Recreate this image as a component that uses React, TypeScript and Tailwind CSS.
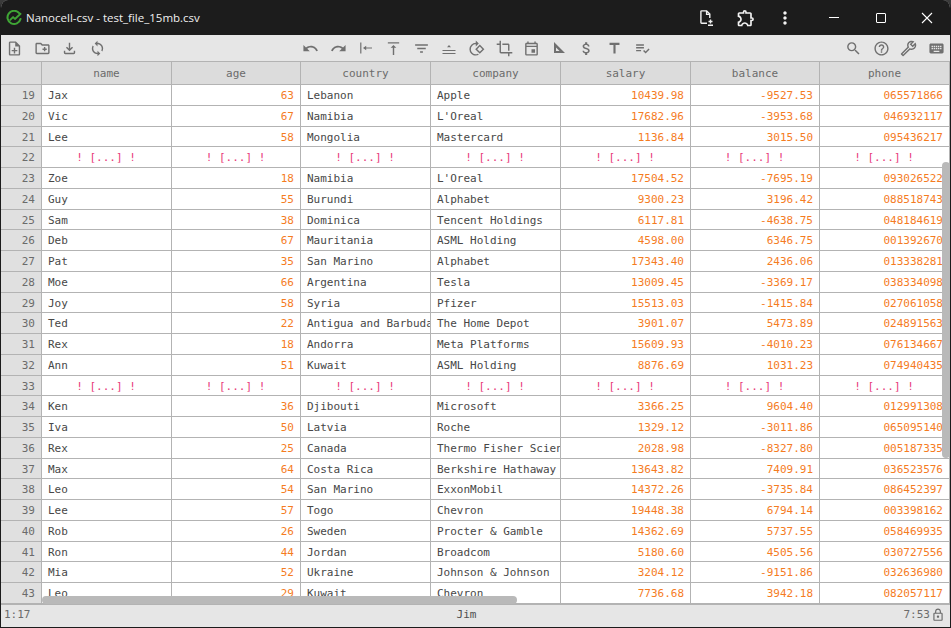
import React from 'react';
import {
  MdOutlineNoteAdd, MdOutlineCreateNewFolder, MdOutlineFileDownload, MdOutlineSync,
  MdUndo, MdRedo, MdOutlineVerticalAlignTop, MdFilterList, MdOutlineRotate90DegreesCcw,
  MdCrop, MdOutlineEvent, MdAttachMoney, MdTitle, MdPlaylistAddCheck, MdSearch,
  MdHelpOutline, MdOutlineBuild, MdKeyboard, MdOutlineLock, MdOutlineExtension, MdMoreVert,
} from 'react-icons/md';

type Row = [number, string, number, string, string, string, string, string];

const rows: (Row | number)[] = [
  [19, 'Jax', 63, 'Lebanon', 'Apple', '10439.98', '-9527.53', '065571866'],
  [20, 'Vic', 67, 'Namibia', "L'Oreal", '17682.96', '-3953.68', '046932117'],
  [21, 'Lee', 58, 'Mongolia', 'Mastercard', '1136.84', '3015.50', '095436217'],
  22,
  [23, 'Zoe', 18, 'Namibia', "L'Oreal", '17504.52', '-7695.19', '093026522'],
  [24, 'Guy', 55, 'Burundi', 'Alphabet', '9300.23', '3196.42', '088518743'],
  [25, 'Sam', 38, 'Dominica', 'Tencent Holdings', '6117.81', '-4638.75', '048184619'],
  [26, 'Deb', 67, 'Mauritania', 'ASML Holding', '4598.00', '6346.75', '001392670'],
  [27, 'Pat', 35, 'San Marino', 'Alphabet', '17343.40', '2436.06', '013338281'],
  [28, 'Moe', 66, 'Argentina', 'Tesla', '13009.45', '-3369.17', '038334098'],
  [29, 'Joy', 58, 'Syria', 'Pfizer', '15513.03', '-1415.84', '027061058'],
  [30, 'Ted', 22, 'Antigua and Barbuda', 'The Home Depot', '3901.07', '5473.89', '024891563'],
  [31, 'Rex', 18, 'Andorra', 'Meta Platforms', '15609.93', '-4010.23', '076134667'],
  [32, 'Ann', 51, 'Kuwait', 'ASML Holding', '8876.69', '1031.23', '074940435'],
  33,
  [34, 'Ken', 36, 'Djibouti', 'Microsoft', '3366.25', '9604.40', '012991308'],
  [35, 'Iva', 50, 'Latvia', 'Roche', '1329.12', '-3011.86', '065095140'],
  [36, 'Rex', 25, 'Canada', 'Thermo Fisher Scientific', '2028.98', '-8327.80', '005187335'],
  [37, 'Max', 64, 'Costa Rica', 'Berkshire Hathaway', '13643.82', '7409.91', '036523576'],
  [38, 'Leo', 54, 'San Marino', 'ExxonMobil', '14372.26', '-3735.84', '086452397'],
  [39, 'Lee', 57, 'Togo', 'Chevron', '19448.38', '6794.14', '003398162'],
  [40, 'Rob', 26, 'Sweden', 'Procter & Gamble', '14362.69', '5737.55', '058469935'],
  [41, 'Ron', 44, 'Jordan', 'Broadcom', '5180.60', '4505.56', '030727556'],
  [42, 'Mia', 52, 'Ukraine', 'Johnson & Johnson', '3204.12', '-9151.86', '032636980'],
  [43, 'Leo', 29, 'Kuwait', 'Chevron', '7736.68', '3942.18', '082057117'],
];

const headers = ['name', 'age', 'country', 'company', 'salary', 'balance', 'phone'];
const widths = ['w-[130px]', 'w-[129px]', 'w-[130px]', 'w-[130px]', 'w-[130px]', 'w-[129px]', 'w-[130px]'];

function DataRow({ row }: { row: Row | number }) {
  const num = typeof row === 'number' ? row : row[0];
  return (
    <div className="flex h-[20.75px] border-b border-[#b3b3b3] bg-white leading-[22px]">
      <div className="h-full w-[41px] shrink-0 border-r border-[#b3b3b3] bg-[#e0e0e0] pr-[6px] text-right text-[#6b6b6b]">{num}</div>
      {typeof row === 'number'
        ? widths.map((w, i) => (
            <div key={i} className={`${w} shrink-0 border-r border-[#b3b3b3] pr-[1px] text-center whitespace-pre text-[#e8397a]`}>
              ! [...] !
            </div>
          ))
        : widths.map((w, i) => {
            const isRight = i === 1 || i >= 4;
            return (
              <div key={i} className={`${w} shrink-0 overflow-hidden whitespace-pre border-r border-[#b3b3b3] ${isRight ? 'pr-[6px] text-right text-[#f57c1f]' : 'pl-[6px] text-[#474747]'}`}>
                {row[i + 1]}
              </div>
            );
          })}
    </div>
  );
}

function Slot({ children }: { children: React.ReactNode }) {
  return <div className="flex w-[27.6px] items-center justify-center">{children}</div>;
}

function TriangleIcon() {
  return (
    <svg width="14" height="14" viewBox="0 0 14 14">
      <path d="M2 1v11h11z M4 6.5V10h3.6z" fill="currentColor" fillRule="evenodd" />
    </svg>
  );
}

function AlignBottomLines() {
  return (
    <svg width="14" height="14" viewBox="0 0 14 14">
      <path d="M0.5 9h13v1h-13zM0.5 12h13v1h-13zM5 6.2h4L7 4z" fill="currentColor" />
    </svg>
  );
}

function IndentLeft() {
  return (
    <svg width="14" height="14" viewBox="0 0 14 14">
      <path d="M1.2 1.5h1.2v11H1.2zM13 6.4H7.2V4.8L4 7l3.2 2.2V7.6H13z" fill="currentColor" />
    </svg>
  );
}

function AppLogo() {
  return (
    <svg width="16" height="16" viewBox="0 0 17 17" fill="none">
      <path d="M14 3.4A7 7 0 1 0 15.4 9.5" stroke="#3fa535" strokeWidth="2.2" strokeLinecap="round" />
      <path d="M4.5 10.5 7.5 7.5 9.5 9.5 15.5 4" stroke="#3fa535" strokeWidth="2" strokeLinecap="round" strokeLinejoin="round" />
    </svg>
  );
}

export default function App() {
  return (
    <div className="h-[628px] w-[951px] overflow-hidden bg-[#3a3a3a] font-['DejaVu_Sans_Mono',monospace] text-[11px]">
      <div className="relative flex h-full flex-col overflow-hidden rounded-t-[8px] border border-t-0 border-[#1c1c1c] bg-[#e6e6e6]">
        {/* Title bar */}
        <div className="flex h-[35px] shrink-0 items-center bg-[#1c1c1c] text-white">
          <div className="ml-[5px] mr-[4px]"><AppLogo /></div>
          <span className="font-['Open_Sans',sans-serif] text-[11.5px] text-[#f0f0f0]">Nanocell-csv - test_file_15mb.csv</span>
          <div className="ml-auto flex items-center">
            <svg width="16" height="16" viewBox="0 0 16 16" fill="none" stroke="#f2f2f2" strokeWidth="1.4" className="mr-[21px]">
              <path d="M8 13.3H2.6a.7.7 0 0 1-.7-.7V1.6a.7.7 0 0 1 .7-.7h5l3.2 3.2V8" />
              <path d="M7.6 1v3.4h3.2" />
              <path d="M9 15.3h5M11.5 9.5v4M9.5 11.5h4" />
            </svg>
            <MdOutlineExtension size={20} className="mr-[19px] text-[#f2f2f2]" />
            <MdMoreVert size={20} className="mr-[34px] text-[#f2f2f2]" />
            <div className="mr-[37px] h-px w-[10px] bg-white" />
            <div className="mr-[35px] h-[10px] w-[10px] rounded-[1px] border border-white" />
            <svg width="12" height="12" viewBox="0 0 12 12" stroke="white" strokeWidth="1.1" className="mr-[17px]">
              <path d="M1 1l10 10M11 1L1 11" />
            </svg>
          </div>
        </div>
        {/* Toolbar */}
        <div className="flex h-[26px] shrink-0 items-center justify-between bg-[#e6e6e6] text-[#707070]">
          <div className="flex items-center">
            <Slot><MdOutlineNoteAdd size={17} /></Slot>
            <Slot><MdOutlineCreateNewFolder size={17} /></Slot>
            <Slot><MdOutlineFileDownload size={17} /></Slot>
            <Slot><MdOutlineSync size={17} /></Slot>
          </div>
          <div className="ml-[2px] flex items-center">
            <Slot><MdUndo size={17} /></Slot>
            <Slot><MdRedo size={17} /></Slot>
            <Slot><IndentLeft /></Slot>
            <Slot><MdOutlineVerticalAlignTop size={17} /></Slot>
            <Slot><MdFilterList size={17} /></Slot>
            <Slot><AlignBottomLines /></Slot>
            <Slot><MdOutlineRotate90DegreesCcw size={17} className="-scale-x-100" /></Slot>
            <Slot><MdCrop size={17} /></Slot>
            <Slot><MdOutlineEvent size={17} /></Slot>
            <Slot><TriangleIcon /></Slot>
            <Slot><MdAttachMoney size={17} /></Slot>
            <Slot><MdTitle size={17} /></Slot>
            <Slot><MdPlaylistAddCheck size={17} /></Slot>
          </div>
          <div className="flex items-center">
            <Slot><MdSearch size={17} /></Slot>
            <Slot><MdHelpOutline size={17} /></Slot>
            <Slot><MdOutlineBuild size={17} className="-scale-x-100" /></Slot>
            <Slot><MdKeyboard size={17} /></Slot>
          </div>
        </div>
        {/* Table */}
        <div className="relative min-h-0 flex-1 overflow-hidden border-t border-[#b3b3b3]">
          <div className="flex h-[23px] items-center border-b border-[#b3b3b3] bg-[#dcdcdc] text-[#6b6b6b]">
            <div className="h-full w-[41px] shrink-0 border-r border-[#b3b3b3]" />
            {headers.map((h, i) => (
              <div key={h} className={`${widths[i]} flex h-full shrink-0 items-center justify-center border-r border-[#b3b3b3] pt-[2px]`}>
                {h}
              </div>
            ))}
          </div>
          {rows.map((r, i) => (
            <DataRow key={i} row={r} />
          ))}
          {/* scrollbars */}
          <div className="absolute bottom-0 left-[41px] h-[8px] w-[475px] rounded-full bg-[#b9b9b9]" />
          <div className="absolute right-0 top-[100px] h-[296px] w-[8px] rounded-full bg-[#b9b9b9]" />
        </div>
        {/* Status bar */}
        <div className="flex h-[23px] shrink-0 items-center justify-between border-t border-[#b3b3b3] bg-[#e6e6e6] pb-[2px] pl-[3px] pr-[5px] text-[#6b6b6b]">
          <span className="w-[100px]">1:17</span>
          <span className="text-[#4f4f4f]">Jim</span>
          <span className="flex w-[116px] items-center justify-end gap-[1px]">7:53<MdOutlineLock size={14} /></span>
        </div>
      </div>
    </div>
  );
}
